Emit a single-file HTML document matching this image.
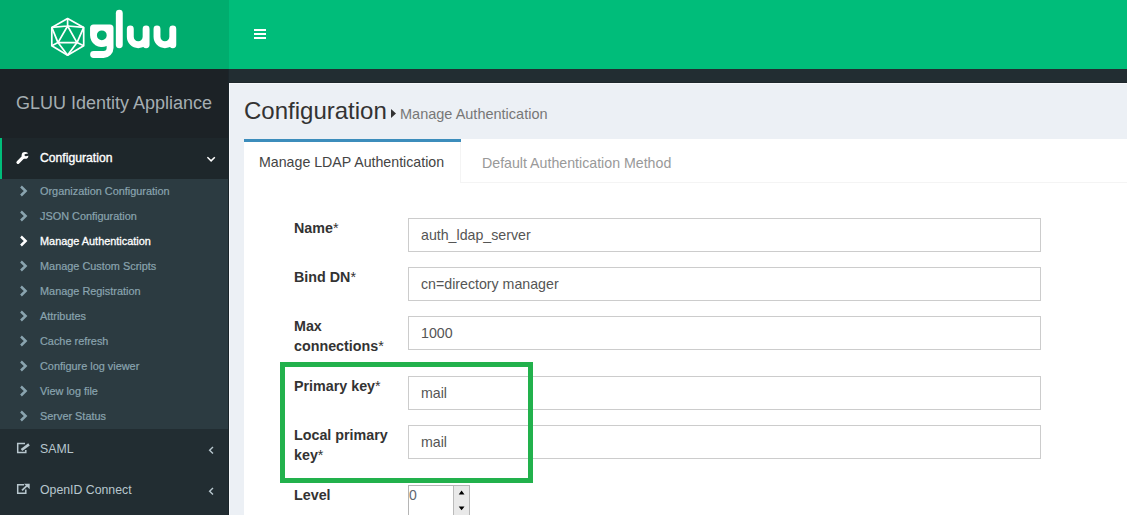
<!DOCTYPE html>
<html><head><meta charset="utf-8">
<style>
*{box-sizing:border-box;margin:0;padding:0}
html,body{width:1127px;height:515px;overflow:hidden;background:#ecf0f5;font-family:"Liberation Sans",sans-serif}
.abs{position:absolute}
#logo{left:0;top:0;width:229px;height:69px;background:#00ad6e}
#navbar{left:229px;top:0;width:898px;height:69px;background:#00bd7a}
#strip{left:229px;top:69px;width:898px;height:14px;background:#222d32}
#sidebar{left:0;top:69px;width:229px;height:446px;background:#1c2226}
#sbline{left:228px;top:69px;width:1px;height:446px;background:#1b252a}
#wline{left:229px;top:83px;width:1px;height:432px;background:#f7f9fc}
#wline2{left:229px;top:83px;width:898px;height:1px;background:#f6f8fa}
#dline{left:229px;top:82px;width:898px;height:1px;background:#1e272c}
.sbtitle{left:16px;top:92px;font-size:18px;color:#a5aeb2;white-space:nowrap;line-height:22px}
#active{left:0;top:138px;width:228px;height:41px;background:#1e272b}
#activeb{left:0;top:138px;width:2px;height:41px;background:#00bd7a}
#tree{left:0;top:179px;width:228px;height:250px;background:#2c3b41}
#rest{left:0;top:429px;width:228px;height:86px;background:#222d32}
.mi{left:40px;font-size:12.3px;color:#fff;white-space:nowrap;line-height:16px}
.si{left:40px;font-size:10.9px;color:#8aa4af;-webkit-text-stroke:0.2px #8aa4af;white-space:nowrap;line-height:14px}
.si.on{color:#fff;-webkit-text-stroke:0.3px #fff}
.chev{left:20px;width:8px;height:10px}
#content-h1{left:244px;top:97px;font-size:24px;color:#333;white-space:nowrap;line-height:28px}
#small{left:400px;top:105px;font-size:14.5px;color:#777;white-space:nowrap;line-height:18px}
#box{left:244px;top:139px;width:883px;height:376px;background:#fff}
#tabline{left:461px;top:182px;width:666px;height:1px;background:#f4f4f4}
#tabr{left:460px;top:142px;width:1px;height:41px;background:#f4f4f4}
#tabtop{left:244px;top:139px;width:217px;height:3px;background:#3c8dbc}
.tab{font-size:14.2px;white-space:nowrap;line-height:18px}
.lbl{left:294px;font-size:14.3px;font-weight:bold;color:#333;white-space:nowrap;line-height:20px}
.lbl span{font-weight:normal}
.inp{left:408px;width:633px;height:34px;border:1px solid #ccc;background:#fff}
.val{left:421px;font-size:14.2px;color:#555;white-space:nowrap;line-height:18px}
#hl{left:280px;top:362px;width:253px;height:121px;border:5px solid #22b14c}
</style></head><body>
<div class="abs" id="logo">
<svg width="229" height="69" viewBox="0 0 229 69" style="position:absolute;left:0;top:0">
<g fill="none" stroke="#fff" stroke-width="1.7" stroke-linejoin="round">
<polygon points="67.6,18.5 83.7,27.4 83.7,45.7 67.6,55.2 51.8,45.7 51.8,27.4"/>
<polyline points="67.6,18.5 67.6,26 51.8,27.4"/>
<line x1="67.6" y1="26" x2="83.7" y2="27.4"/>
<polygon points="67.6,26 58,42.6 77,42.6"/>
<polyline points="51.8,27.4 58,42.6 51.8,45.7"/>
<polyline points="83.7,27.4 77,42.6 83.7,45.7"/>
<polyline points="58,42.6 67.6,55.2 77,42.6"/>
</g>
<path fill="#fff" fill-rule="evenodd" d="M93.6 24.5 H110 A3.5 3.5 0 0 1 113.5 28 V48 A9.95 9.95 0 0 1 103.6 57.95 H93.6 A3.45 3.45 0 0 1 93.6 51.05 H103.6 A3.05 3.05 0 0 0 106.65 48 V46 A11.75 11.75 0 0 1 90.05 35.3 V28 A3.5 3.5 0 0 1 93.6 24.5 Z M96.9 35.3 A4.9 4.9 0 1 0 106.7 35.3 A4.9 4.9 0 1 0 96.9 35.3 Z"/>
<g fill="none" stroke="#fff" stroke-width="6.9" stroke-linecap="round" stroke-linejoin="round">
<path d="M119.3 13.2 V44.8"/>
<path d="M130.3 29 V36.8 A7.9 7.9 0 0 0 146.1 36.8 M146.1 29 V44.7"/>
<path d="M157 29 V36.8 A7.9 7.9 0 0 0 172.8 36.8 M172.8 29 V44.7"/>
</g>
</svg>
</div>
<div class="abs" id="navbar">
<svg class="abs" style="left:25px;top:29px" width="12" height="10"><rect x="0" y="0" width="12" height="2" fill="#fff"/><rect x="0" y="4" width="12" height="2" fill="#fff"/><rect x="0" y="8" width="12" height="2" fill="#fff"/></svg>
</div>
<div class="abs" id="strip"></div>
<div class="abs" id="dline"></div>
<div class="abs" id="sidebar"></div>
<div class="abs" id="sbline"></div>
<div class="abs" id="wline2"></div>
<div class="abs" id="wline"></div>
<div class="abs sbtitle">GLUU Identity Appliance</div>
<div class="abs" id="active"></div>
<div class="abs" id="activeb"></div>
<div class="abs" id="tree"></div>
<div class="abs" id="rest"></div>

<!-- wrench -->
<svg class="abs" style="left:12px;top:146px" width="22" height="22" viewBox="0 0 22 22">
<path d="M6 16.4 L10.7 11.7" stroke="#fff" stroke-width="3.2" stroke-linecap="round"/>
<circle cx="13" cy="9.4" r="3.4" fill="#fff"/>
<path d="M13.6 9.1 L17.5 8.4" stroke="#1e272b" stroke-width="2.2"/>
<circle cx="13.6" cy="9.1" r="1.15" fill="#1e272b"/>
</svg>
<div class="abs mi" style="top:150px;font-weight:normal;font-size:12.2px;-webkit-text-stroke:0.35px #fff">Configuration</div>
<svg class="abs" style="left:207px;top:156px" width="9" height="7" viewBox="0 0 9 7"><path d="M0.4 1.2 L4.1 4.9 L7.8 1.2" fill="none" stroke="#fff" stroke-width="1.5"/></svg>

<div class="abs si" style="top:184px">Organization Configuration</div>
<div class="abs si" style="top:209px">JSON Configuration</div>
<div class="abs si on" style="top:234px">Manage Authentication</div>
<div class="abs si" style="top:259px">Manage Custom Scripts</div>
<div class="abs si" style="top:284px">Manage Registration</div>
<div class="abs si" style="top:309px">Attributes</div>
<div class="abs si" style="top:334px">Cache refresh</div>
<div class="abs si" style="top:359px">Configure log viewer</div>
<div class="abs si" style="top:384px">View log file</div>
<div class="abs si" style="top:409px">Server Status</div>
<svg class="abs" style="left:0;top:179px" width="40" height="250" viewBox="0 0 40 250">
<g fill="none" stroke-width="2.5" stroke-linejoin="miter">
<path d="M21 7.5 L25.6 12 L21 16.5" stroke="#8aa4af"/>
<path d="M21 32.5 L25.6 37 L21 41.5" stroke="#8aa4af"/>
<path d="M21 57.5 L25.6 62 L21 66.5" stroke="#fff"/>
<path d="M21 82.5 L25.6 87 L21 91.5" stroke="#8aa4af"/>
<path d="M21 107.5 L25.6 112 L21 116.5" stroke="#8aa4af"/>
<path d="M21 132.5 L25.6 137 L21 141.5" stroke="#8aa4af"/>
<path d="M21 157.5 L25.6 162 L21 166.5" stroke="#8aa4af"/>
<path d="M21 182.5 L25.6 187 L21 191.5" stroke="#8aa4af"/>
<path d="M21 207.5 L25.6 212 L21 216.5" stroke="#8aa4af"/>
<path d="M21 232.5 L25.6 237 L21 241.5" stroke="#8aa4af"/>
</g></svg>

<svg class="abs" style="left:0;top:430px" width="40" height="30" viewBox="0 430 40 30"><g fill="none" stroke="#b8c7ce" stroke-width="1.5"><path d="M25.8 450 V452.4 H17.7 V443.6 H25"/></g><path d="M21.5 450 L29 444.4" stroke="#b8c7ce" stroke-width="2.6" stroke-linecap="butt"/></svg>
<div class="abs mi" style="top:441px;color:#b8c7ce">SAML</div>
<svg class="abs" style="left:208px;top:446px" width="6" height="9" viewBox="0 0 6 9"><path d="M5 1 L1.6 4.3 L5 7.6" fill="none" stroke="#b8c7ce" stroke-width="1.4"/></svg>

<svg class="abs" style="left:0;top:470px" width="40" height="30" viewBox="0 470 40 30"><g fill="none" stroke="#b8c7ce" stroke-width="1.5"><path d="M25.8 489.5 V493.3 H17.7 V484.8 H24"/></g><path d="M22 490.4 L27.5 485.2" stroke="#b8c7ce" stroke-width="1.8"/><path d="M24 483.7 H29.7 V489.3Z" fill="#b8c7ce"/></svg>
<div class="abs mi" style="top:482px;color:#b8c7ce">OpenID Connect</div>
<svg class="abs" style="left:208px;top:487px" width="6" height="9" viewBox="0 0 6 9"><path d="M5 1 L1.6 4.3 L5 7.6" fill="none" stroke="#b8c7ce" stroke-width="1.4"/></svg>

<div class="abs" id="content-h1">Configuration</div>
<svg class="abs" style="left:391px;top:109px" width="6" height="9"><path d="M0 0 L5 4.5 L0 9Z" fill="#333"/></svg>
<div class="abs" id="small">Manage Authentication</div>

<div class="abs" id="box"></div>
<div class="abs" id="tabline"></div>
<div class="abs" id="tabr"></div>
<div class="abs" id="tabtop"></div>
<div class="abs tab" style="left:259px;top:153px;color:#444">Manage LDAP Authentication</div>
<div class="abs tab" style="left:482px;top:154px;color:#999">Default Authentication Method</div>

<div class="abs lbl" style="top:218px">Name<span>*</span></div>
<div class="abs inp" style="top:218px"></div>
<div class="abs val" style="top:226px">auth_ldap_server</div>

<div class="abs lbl" style="top:267px">Bind DN<span>*</span></div>
<div class="abs inp" style="top:267px"></div>
<div class="abs val" style="top:275px">cn=directory manager</div>

<div class="abs lbl" style="top:316px">Max</div>
<div class="abs lbl" style="top:336px">connections<span>*</span></div>
<div class="abs inp" style="top:316px"></div>
<div class="abs val" style="top:324px">1000</div>

<div class="abs lbl" style="top:376px">Primary key<span>*</span></div>
<div class="abs inp" style="top:376px"></div>
<div class="abs val" style="top:384px">mail</div>

<div class="abs lbl" style="top:425px">Local primary</div>
<div class="abs lbl" style="top:445px">key<span>*</span></div>
<div class="abs inp" style="top:425px"></div>
<div class="abs val" style="top:433px">mail</div>

<div class="abs lbl" style="top:485px">Level</div>
<div class="abs" style="left:408px;top:485px;width:62px;height:40px;border:1px solid #b5b5b5;background:#fff"></div>
<div class="abs" style="left:453px;top:486px;width:16px;height:40px;background:#e9e9e9;border-left:1px solid #bbb"></div>
<svg class="abs" style="left:456px;top:488px" width="10" height="26" viewBox="456 488 10 26"><path d="M458.7 494.4 L461.6 490.5 L464.5 494.4Z M458.7 506.4 L464.5 506.4 L461.6 510.3Z" fill="#000"/></svg>
<div class="abs" style="left:409px;top:487px;font-size:14px;color:#5f6870;line-height:16px">0</div>

<div class="abs" id="hl"></div>
</body></html>
